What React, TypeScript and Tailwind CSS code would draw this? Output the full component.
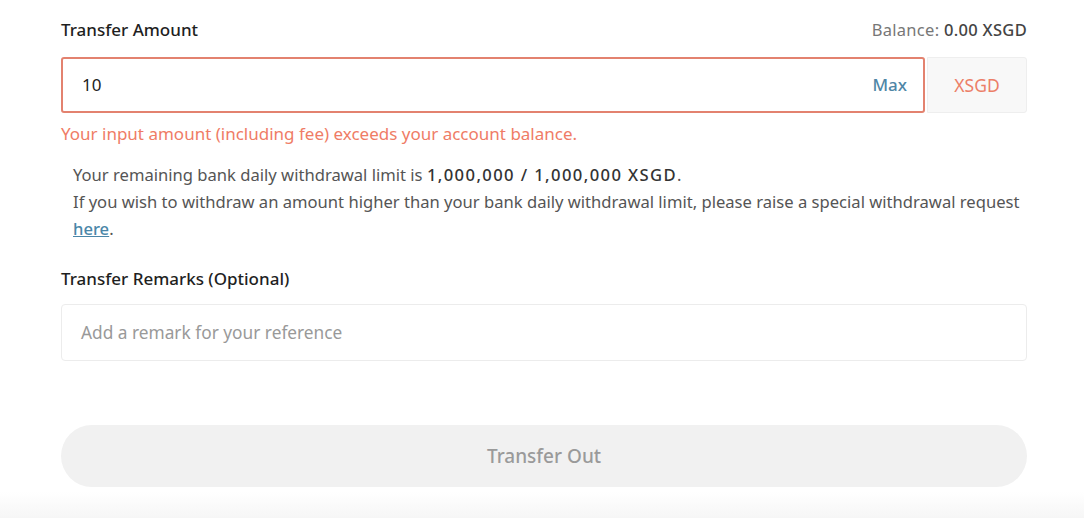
export default function App() {
  return (
    <div
      className="w-[1084px] h-[518px] bg-white overflow-hidden flex flex-col"
      style={{ fontFamily: '"Noto Sans", "Open Sans", sans-serif' }}
    >
      <div className="pl-[61px] pr-[57px] pt-[17px] flex-1">
        <div className="flex items-center justify-between h-[26px]">
          <span className="text-[17px] font-medium text-[#1f1f1f]">Transfer Amount</span>
          <span className="text-[16.5px] text-[#777] tracking-[0.3px]">
            Balance: <span className="text-[#444] font-medium">0.00 XSGD</span>
          </span>
        </div>

        <div className="flex mt-[14px] h-[56px]">
          <div className="flex-1 flex items-center border-2 border-[#e3826f] rounded-[3px] pl-[19px] pr-[16px] bg-white">
            <span className="flex-1 text-[17px] text-[#222]">10</span>
            <span className="text-[17px] font-medium text-[#4f86a6]">Max</span>
          </div>
          <div className="w-[100px] ml-[2px] flex items-center justify-center bg-[#f8f8f8] border border-[#eeeeee] rounded-r-[3px] text-[17.5px] text-[#ec7f68]">
            XSGD
          </div>
        </div>

        <p className="mt-[10px] text-[17px] text-[#ef7c66] leading-[22px]">
          Your input amount (including fee) exceeds your account balance.
        </p>

        <div className="mt-[16px] pl-[12px] text-[16.6px] text-[#555] leading-[27px]">
          <p>
            Your remaining bank daily withdrawal limit is{' '}
            <span className="text-[#333] font-medium tracking-[1.4px]">1,000,000 / 1,000,000 XSGD</span>.
          </p>
          <p>
            If you wish to withdraw an amount higher than your bank daily withdrawal limit, please raise a special withdrawal request{' '}
            <a className="text-[#4a86a8] underline font-medium">here</a>.
          </p>
        </div>

        <div className="mt-[24px] text-[17px] font-medium text-[#1f1f1f] h-[26px]">
          Transfer Remarks (Optional)
        </div>

        <div className="mt-[12px] h-[57px] border border-[#ececec] rounded-[4px] flex items-center px-[19px] text-[17.3px] text-[#999]">
          Add a remark for your reference
        </div>

        <div className="mt-[64px] h-[62px] rounded-full bg-[#f1f1f1] flex items-center justify-center text-[19px] font-medium text-[#9a9a9a]">
          Transfer Out
        </div>
      </div>
      <div className="h-[26px] bg-gradient-to-b from-white to-[#f6f6f6]" />
    </div>
  )
}
